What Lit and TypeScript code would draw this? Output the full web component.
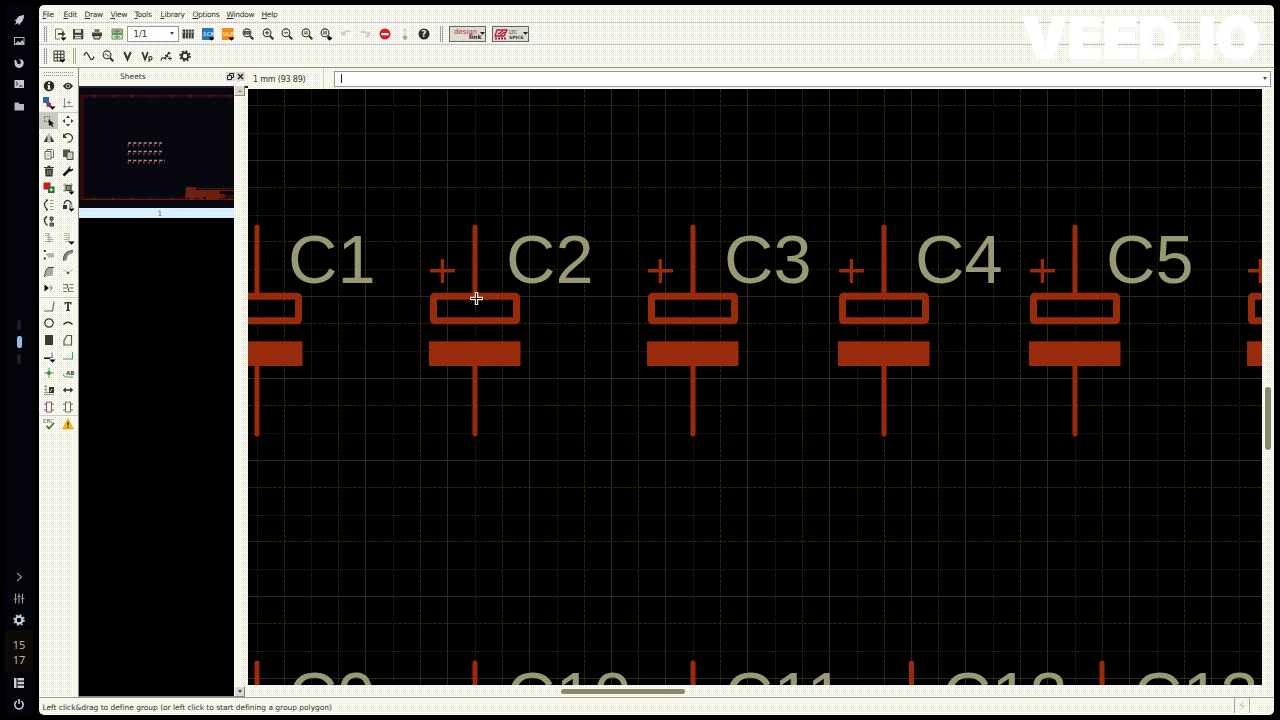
import { LitElement, html, svg, css, nothing } from "lit";
import { customElement } from "lit/decorators.js";

const K = "#35352c";
const caret = svg`<path d="M6.500 9.500h6l-3 3.200z" fill="#000"/>`;
const lens = (inner: unknown) => svg`<circle cx="5" cy="4.800" r="3.900" fill="#eeeee0" stroke="${K}" stroke-width="1.100"/><path d="M8 8l3.300 3.300" stroke="${K}" stroke-width="2.200"/>${inner}`;
const gear = (c: string) => svg`<circle cx="6" cy="6" r="3.300" fill="none" stroke="${c}" stroke-width="2.200"/><circle cx="6" cy="6" r="4.900" fill="none" stroke="${c}" stroke-width="1.800" stroke-dasharray="1.900 1.950"/>`;
const chip = (c: string) => svg`<path d="M3.500 1h2q.5 1.200 1 0h2v10h-5z" fill="none" stroke="${c}"/><path d="M1 3h2.500M1 9h2.500M8.500 3H11M8.500 9H11" stroke="${c}"/>`;

const icons: Record<string, unknown> = {
  rocket: svg`<path d="M11 1C7 1 4.500 3.200 3.400 5.400L1 6l2 1 .2 1.300L1.500 11l3-1.800L5.500 9.500l.6 2L7.500 9C9.500 7.500 11 5 11 1z" fill="#c4c8d4"/>`,
  image: svg`<rect x="1.500" y="2.500" width="9.500" height="7" fill="none" stroke="#a8b4b0"/><path d="M2 9l3-3 2 1.500L9 5l2 2v3H2z" fill="#a8b8ac"/>`,
  fox: svg`<path d="M1.500 2.500l2 1L4 5.500Q4.500 7.500 6.500 7.300 8.500 6.500 7.500 4L6 2Q11.500 2.500 10.700 7 9.500 11 6 11 1 10.500 1.500 5z" fill="#c0c4d0"/>`,
  term: svg`<rect x="1.500" y="2" width="9.500" height="8" fill="#c4c8d0"/><path d="M3 4l2 1.700L3 7.500M6 8h3.500" stroke="#222" fill="none"/>`,
  folder: svg`<path d="M1.500 2.500h4l1 1.500h4.500v6.500h-9.500z" fill="#b4b8c4"/>`,
  chev: svg`<path d="M4 2l4.500 4L4 10" stroke="#8c8c80" fill="none" stroke-width="1.200"/>`,
  sliders: svg`<path d="M2.500 1.500v10M6 1.500v10M9.500 1.500v10M.8 7h3.400M4.400 4.500h3.400M8 6.500h3.500" stroke="#989888" stroke-width="1.200"/>`,
  gearl: gear("#c4ccd4"),
  list: svg`<path d="M1 1h2.500v10H1zM4.500 1H11v2.400H4.500zM4.500 4.800H11v2.400H4.500zM4.500 8.600H11V11H4.500z" fill="#ccd0cc"/>`,
  power: svg`<path d="M3.700 3.200a4.200 4.200 0 1 0 4.600 0M6 1v5" stroke="#c4ccc8" fill="none" stroke-width="1.600"/>`,
  export: svg`<path d="M9 4V2.500L7.500 1h-6v10H6M9 8v1" stroke="#777768" fill="none"/><path d="M4 5h4V3l3.500 3L8 8.500V6.700H4z" fill="${K}"/>${caret}`,
  save: svg`<path d="M1 1h9.500l.8.800v9.500H1z" fill="#44443a"/><path d="M3 1.500h6v3.200H3zM2.500 7h7v1H2.500zM3 8.800h6v1.700H3z" fill="#e4e4d8"/>`,
  print: svg`<path d="M3.500 1h5v3h-5z" fill="#777"/><path d="M1 4.500h10v4H1z" fill="#44443a"/><path d="M3 7.500h6V11H3z" fill="#ccccc0" stroke="${K}"/>`,
  sheet: svg`<path d="M1 1h10.500v4.500H1z" fill="#a4b49c" stroke="#7a8c72"/><path d="M1 6.500h10.500v4.500H1z" fill="#d8ecc8" stroke="#50a050"/><path d="M3 3.200h6M3 8.800h6M6 1v10" stroke="#608058"/>`,
  books: svg`<path d="M.5 1.500H3V10.500H.5zM3.700 1.500h2.200v9H3.700zM6.600 1.500h2.200v9H6.600zM9.500 1.500h2.200v9H9.500z" fill="#3c3c34"/><path d="M.5 4h11" stroke="#ddd" stroke-dasharray="1.500 1.600"/>`,
  scr: svg`<rect x="0" y="0" width="11.500" height="12" fill="#2c78b8"/><text x="1" y="8" font-size="5" fill="#bcd8f0" font-weight="bold">SCR</text>${caret}`,
  ulp: svg`<rect x="0" y="0" width="11.500" height="12" fill="#f08c1c"/><text x="1" y="8" font-size="5" fill="#fce0a0" font-weight="bold">ULP</text>${caret}`,
  zfit: lens(svg`<path d="M2.500 3.500h5v2.600h-5z" fill="#777" stroke="${K}" stroke-width=".8"/>`),
  zin: lens(svg`<path d="M3 4.800h4M5 2.800v4" stroke="${K}"/>`),
  zout: lens(svg`<path d="M3 4.800h4" stroke="${K}"/>`),
  zred: lens(svg`<path d="M3 4h4M3 5.700h4" stroke="${K}" stroke-width=".8"/>`),
  zsel: svg`${lens(svg`<rect x="3" y="3" width="4" height="3.500" fill="#88888a"/>`)}${caret}`,
  undo: svg`<path d="M2.500 6.500L1 3.500M2 7l4-.5M2.500 6.500Q5 2 10.500 3.500" stroke="#ccccbe" stroke-width="1.700" fill="none"/>`,
  redo: svg`<path d="M9.500 6.500L11 3.500M10 8.500L6.500 8M10 8Q8 3 1.500 4" stroke="#ccccbe" stroke-width="1.700" fill="none"/>`,
  stop: svg`<circle cx="6" cy="6" r="5.500" fill="#d81c24"/><path d="M2.500 5h7v2.200h-7z" fill="#fff"/>`,
  dots: svg`<circle cx="6" cy="2" r="1.600" fill="#ccccbe"/><circle cx="6" cy="5.700" r="1.300" fill="#ccccbe"/><circle cx="6" cy="9.500" r="2.200" fill="#a8a89c"/>`,
  help: svg`<circle cx="6" cy="6" r="5.500" fill="#2c2c26"/><text x="3.300" y="9.300" font-size="9" font-weight="bold" fill="#f0f0e0">?</text>`,
  grid: svg`<path d="M1 1h10v10H1zM4.300 1v10M7.700 1v10M1 4.300h10M1 7.700h10" fill="none" stroke="${K}"/>${caret}`,
  wave: svg`<path d="M1 5.500Q3 .5 5 4.500T8 9.500Q10 10 11 6.500" fill="none" stroke="${K}" stroke-width="1.300"/>`,
  zwave: lens(svg`<path d="M2.500 5Q4 2.500 5 5T7.500 5" fill="none" stroke="${K}" stroke-width=".8"/>`),
  V: svg`<path d="M3.300 2L6.500 9.500 9.700 2" fill="none" stroke="${K}" stroke-width="2"/>`,
  Vp: svg`<path d="M1.200 2L4 9.500 6.800 2" fill="none" stroke="${K}" stroke-width="1.800"/><path d="M8 12V6.500M8 7q3-1 3 1.200T8 9.700" fill="none" stroke="${K}" stroke-width="1.200"/>`,
  probe: svg`<path d="M1 10.500Q2 6.500 4 8t2 .5M4.500 9L9.500 2M5 5l3.500 2M8 2.500l2.500 1" fill="none" stroke="${K}" stroke-width="1.300"/><path d="M8 8.500h4M10 6.500v4" stroke="${K}"/>`,
  gear: gear("#33332c"),
  info: svg`<circle cx="6" cy="6" r="5.300" fill="#2c2c24"/><path d="M5 2.200h2v1.700H5zM4.500 5H7v3.500h.8v1H4.300v-1H5V6h-.5z" fill="#f4f4e4"/>`,
  eye: svg`<path d="M.8 6Q6-1 11.200 6 6 13 .8 6z" fill="#33332c"/><circle cx="6" cy="6" r="2.300" fill="#aaa89c"/><circle cx="6" cy="6" r="1.100" fill="#222"/>`,
  layers: svg`<rect x="0" y="0" width="6" height="6" fill="#2c6cac"/><path d="M3 6h5v4H4z" fill="#b83050"/><path d="M6 4l3 6H5z" fill="#903878"/>${caret}`,
  origin: svg`<path d="M2.500 1v10M1 9.500h10M7 3.500v4M5 5.500h4" stroke="#8c8c80" fill="none"/>`,
  group: svg`<path d="M1.500 1.500h5v5h-5z" fill="none" stroke="#66665c" stroke-dasharray="1.500 1"/><path d="M5.500 4.500l5.500 4-2 .5 1.500 2.500-1.300.6L8 9.700 6 11z" fill="#111"/>`,
  move: svg`<path d="M6 .5l2 2.500H4zM6 11.500L4 9h4zM.5 6L3 4v4zM11.500 6L9 8V4z" fill="${K}"/>`,
  mirror: svg`<path d="M4.500 3v7H.8zM7.500 3v7h3.700z" fill="${K}"/><path d="M6 1v10" stroke="#888"/>`,
  rotate: svg`<path d="M2 3.500Q5 .5 8.500 2.500 12 5 9.500 8.500 8 10.500 5.500 10" fill="none" stroke="${K}" stroke-width="1.200"/><path d="M1 1.500V6h4z" fill="${K}"/>`,
  copy: svg`<path d="M2 3.500h6v7.500H2zM4 3.500V1.500h5L10.500 3v6.500H8" fill="none" stroke="#66665c"/><path d="M3.500 6h3M3.500 8h3" stroke="#aaa"/>`,
  paste: svg`<path d="M1 1.500h7v7.500H1z" fill="#55554c"/><path d="M5 4h6v7.500H5z" fill="#ccccc0" stroke="#44443a"/>`,
  trash: svg`<path d="M2 3.500h8l-.5 8h-7zM1 2h3.500V.8h3V2H11v1H1z" fill="#33332c"/><path d="M4.300 5v5M6 5v5M7.700 5v5" stroke="#999" stroke-width=".8"/>`,
  wrench: svg`<path d="M1.500 10.500L7 5" stroke="#11110c" stroke-width="2.600"/><path d="M6 5.500Q5.500 2 9 1L7.700 3.200 9.200 4.600 11.300 3.300Q11 7 7.500 6.500z" fill="#11110c"/>`,
  change: svg`<rect x=".5" y=".5" width="7" height="7" fill="#c41c24"/><rect x="5" y="4.500" width="6.500" height="6.500" fill="#207028"/><path d="M6.500 7.800h3.500M8.200 6v3.500" stroke="#fff"/>`,
  replace: svg`<path d="M1 3h10M1 8.500h10M3 1v9M9.500 1v9" stroke="#99998c"/><rect x="4" y="3.500" width="5" height="5" fill="#88887c" stroke="#44443a"/>${caret}`,
  pins: svg`<path d="M4.500 1.500Q1 3 1.500 6t3 4.500M5 1.500L3 .5M5 10.500l-2 1" fill="none" stroke="${K}" stroke-width="1.300"/><path d="M7 1.500h3.500M7 4.500h3.500M7 7.500h3.500M7 10.500h3.500" stroke="#999"/>`,
  gates: svg`<path d="M2 5Q4-.5 8 2.500L9.500 5" fill="none" stroke="${K}" stroke-width="1.300"/><rect x="1" y="6" width="4" height="4" fill="${K}"/><rect x="7" y="5" width="3.500" height="4" fill="#aaa"/>${caret}`,
  swap: svg`<path d="M4 1.500Q1 3 1.500 6t3 4.500" fill="none" stroke="${K}" stroke-width="1.400"/><path d="M7 2h3v3H7zM8.500 5v2M7 8h3.500v3H7z" fill="#77776c" stroke="#44443a"/>`,
  name: svg`<path d="M2 1.500h4M2 3.500h4M4 5.500h5M4 7.500h6M2 9.500h8M6 1v10" stroke="#a4a498"/>`,
  value: svg`<path d="M2 1.500h5M2 3.500h4M3 5.500h5M2 7.500h5M3 9.500h5M7 1v10" stroke="#b0b0a4"/>${caret}`,
  smash: svg`<path d="M.8 1h2v2h-2zM.8 8.500h2v2h-2z" fill="#333"/><path d="M5 4h6v4.500H5z" fill="#b4b4a8"/><path d="M3 5.700h2" stroke="#777"/>`,
  miter: svg`<path d="M1.500 11.500V8Q3 2 11 1.500V4Q5 5 4.500 11.500z" fill="#8c8c80"/><path d="M1.500 11.500Q1 2 11 1.500" fill="none" stroke="#44443a"/>`,
  split: svg`<path d="M2 10.500Q3 3 5 1.500h5v8z" fill="#aaaa9e"/><path d="M1.500 11Q2.500 3 5 1.500h6" fill="none" stroke="#44443a"/>`,
  opt: svg`<path d="M1 3l3.500 3h3L11 3" fill="none" stroke="#bbbbae"/><circle cx="6" cy="7" r="1.300" fill="#55554c"/>`,
  invoke: svg`<path d="M1.500 2.500L6 6 1.500 9.500z" fill="#111"/><path d="M7.500 3.500q3.500 2.500 0 5z" fill="#999" stroke="#aaa"/>`,
  pinsw: svg`<path d="M1 2.500h4M1 6h4M1 9.500h4M7.500 2.500h4M7.500 6h4M7.500 9.500h4" stroke="#77776c"/><path d="M5 2l2 8" stroke="#44443a"/>`,
  line: svg`<path d="M1 11h8.500L11 1.500" fill="none" stroke="#66665c" stroke-width="1.200"/>`,
  text: svg`<path d="M2.500 2h7v2.500h-1l-.4-1.200H6.900v6.500l1 .3v.8H4.100v-.8l1-.3V3.300H3.900L3.500 4.500h-1z" fill="#33332c"/>`,
  circle: svg`<circle cx="6" cy="6" r="4.200" fill="none" stroke="#33332c" stroke-width="1.200"/>`,
  arc: svg`<path d="M1.500 7.500Q6 3 10.500 7.500" fill="none" stroke="#33332c" stroke-width="1.400"/>`,
  rect: svg`<rect x="2" y="1" width="8" height="10" fill="#3c3c30"/>`,
  poly: svg`<path d="M2 11V6.500L5 1.500h4.500V11z" fill="none" stroke="#55554c" stroke-width="1.200"/>`,
  bus: svg`<path d="M1 7.500h9M9 2.500v5" fill="none" stroke="#4474a4"/><path d="M1 8.500h6" stroke="#222"/>${caret}`,
  net: svg`<path d="M1 9h10M10.500 2v7" fill="none" stroke="#44a844" stroke-width="1.100"/>`,
  junction: svg`<path d="M1 6h10M6 1v10" stroke="#66885c"/><circle cx="6" cy="6" r="2" fill="#2c9c34"/>`,
  label: svg`<path d="M1 7q1 3 3 3h7" fill="none" stroke="#44a844"/><text x="4" y="8" font-size="5.500" font-weight="bold" fill="#44543c">AB</text>`,
  attr: svg`<path d="M1 2.500h3M1 5.500h3M1 8.500h10M1 10.500h10M3 1v8" fill="none" stroke="#99998c"/><path d="M6 3h5v6H6z" fill="#33332c"/><path d="M7 8l2-3" stroke="#ddd"/>`,
  dim: svg`<path d="M.8 6l3-2.800v2h4.400v-2L11.200 6l-3 2.800v-2H3.800v2z" fill="#33332c"/>`,
  module: chip("#84507c"),
  port: chip("#66665c"),
  erc: svg`<text x="0" y="5" font-size="5.500" fill="#55554c">ERC</text><path d="M3.500 8l2.500 2.500L11 5" fill="none" stroke="#2c8040" stroke-width="1.800"/>`,
  warn: svg`<path d="M6 .8L11.400 11H.6z" fill="#f8b818" stroke="#e8a010" stroke-width=".8"/><path d="M6 4v3.500M6 8.700v1.300" stroke="#222" stroke-width="1.300"/>`,
};
const ico = (n: string) => html`<svg class="ico" width="12" height="12" viewBox="0 0 12 12">${icons[n] ?? nothing}</svg>`;

const VX = [257, 284, 311, 338, 365, 393, 420, 447, 475, 502, 529, 557, 584, 611, 638, 665, 693, 720, 747, 775, 802, 829, 857, 884, 911, 938, 965, 993, 1020, 1047, 1075, 1102, 1129, 1157, 1184, 1211, 1239];
const VSOLID = [365, 447, 529, 611, 665, 747, 829, 911, 965, 1047, 1129, 1211];
const VDASH = [284, 338, 420, 502, 584, 638, 720, 802, 884, 938, 1020, 1102, 1184];
const HY = [105, 133, 160, 187, 215, 241, 269, 296, 323, 351, 378, 405, 433, 460, 487, 515, 541, 569, 596, 623, 651, 678];
const HSOLID = [160, 296, 378, 460, 596, 678];
const HDASH = [105, 187, 241, 323, 405, 487, 541, 623];

@customElement("schematic-canvas")
class SchematicCanvas extends LitElement {
  static styles = css`
    :host { display: block; overflow: hidden; background: #000; }
    svg { display: block; }
    .lbl { font: 68.500px "Liberation Sans", Arial, sans-serif; fill: url(#khaki); }
    .s { stroke: #2c2c20; }
    .a { stroke: #282808; stroke-dasharray: 4 1; }
    .o { stroke: #2a2a08; stroke-dasharray: 1 1; }
  `;
  cap(x: number) {
    return svg`<g fill="none" stroke="url(#rust)">
      <path d="M${x - 2.500} 227q0-2.500 2.500-2.500t2.500 2.500v67h-5zM${x - 2.500} 365h5v69q0 2.500-2.500 2.500t-2.500-2.500z" fill="url(#rust)" stroke="none"/>
      <rect x="${x - 41.500}" y="296.200" width="83" height="24.600" rx="1" stroke-width="7"/>
      <rect x="${x - 46}" y="341.300" width="91.500" height="24.700" fill="url(#rust)" stroke="none"/>
      <path d="M${x - 45} 269h10.700v-10h3.400v10h10.900v3.400h-10.900v10.500h-3.400v-10.500h-10.700z" fill="url(#rust)" stroke="none"/>
    </g>`;
  }
  render() {
    const cls = (v: number, s: number[], d: number[]) => (s.includes(v) ? "s" : d.includes(v) ? "a" : "o");
    return html`<svg width="1014" height="596" viewBox="248 89 1014 596">
      <defs>
        <pattern id="rust" width="2" height="2" patternUnits="userSpaceOnUse"><rect width="2" height="2" fill="#992b00"/><rect y="1" width="1" height="1" fill="#992b33"/></pattern>
        <pattern id="khaki" width="2" height="2" patternUnits="userSpaceOnUse"><rect width="2" height="2" fill="#999966"/><rect y="1" width="1" height="1" fill="#9999aa"/></pattern>
      </defs>
      ${VX.map((x) => svg`<path class=${cls(x, VSOLID, VDASH)} d="M${x + 0.5} 89v596"/>`)}
      ${HY.map((y) => svg`<path class=${cls(y, HSOLID, HDASH)} d="M248 ${y + 0.5}h1014"/>`)}
      ${[257, 475, 693, 884, 1075, 1293].map((x) => this.cap(x))}
      ${[257, 475, 693, 911.5, 1102].map((x) => svg`<path d="M${x - 2.500} 690v-27q0-2.500 2.500-2.500t2.500 2.500v27z" fill="url(#rust)"/>`)}
      ${[[257, "C1"], [475, "C2"], [693, "C3"], [884, "C4"], [1075, "C5"]].map(([x, t]) => svg`<text class="lbl" x="${+x + 31}" y="283">${t}</text>`)}
      ${[[257, "C9"], [475, "C10"], [693, "C11"], [911, "C12"], [1102, "C13"]].map(([x, t]) => svg`<text class="lbl" x="${+x + 31}" y="719.500">${t}</text>`)}
      <path d="M476.500 292v13M470 298.500h13" stroke="#ffe8cc" stroke-width="3.400"/>
      <path d="M476.500 293v11M471 298.500h11" stroke="#000" stroke-width="1"/>
    </svg>`;
  }
}

@customElement("sheet-preview")
class SheetPreview extends LitElement {
  static styles = css`
    :host { display: block; }
    svg { display: block; }
  `;
  render() {
    return html`<svg width="155" height="120" viewBox="79 88 155 120">
      <defs>
        <pattern id="n" width="2" height="2" patternUnits="userSpaceOnUse"><rect width="2" height="2" fill="#040404"/><rect x="1" y="1" width="1" height="1" fill="#0a0a30"/><rect width="1" height="1" fill="#0a0a08"/></pattern>
        <pattern id="m" width="2" height="2" patternUnits="userSpaceOnUse"><rect width="2" height="2" fill="#2c0802"/><rect x="1" y="1" width="1" height="1" fill="#401030"/></pattern>
      </defs>
      <rect x="79" y="87" width="155" height="121" fill="url(#n)"/>
      <path d="M80 94.500h154v3H84v100h150v3H80z" fill="url(#m)"/>
      <path d="M84 199.500h150" stroke="#5c2010"/>
      <path d="M93 96h141M93 199h141" stroke="#702c30" stroke-width="1.500" stroke-dasharray="1.500 17.900"/>
      <path d="M128 143h34M128 151.500h34M128 160.500h37" stroke="#a09888" stroke-width="1.300" stroke-dasharray="3.200 2"/>
      <path d="M127.500 145.500h34M127.500 154h34M127.500 162.500h37" stroke="#8c3438" stroke-width="2.500" stroke-dasharray="1.500 3.700"/>
      <path d="M186 187h10v3h38v1h-14v3h5v4h-5v1h-14v-2h-3v2h-4v-1h-4v2h-4v-2h-6z" fill="#6c2010"/>
      <path d="M195 188.500h39M220 196h14" stroke="#4c1810"/>
    </svg>`;
  }
}

const DOCK = ["rocket", "image", "fox", "term", "folder"];
const TOP: [string, number][] = [
  ["export", 17], ["save", 19], ["print", 20], ["sheet", 19], ["combo", 53], ["books", 18], ["scr", 21], ["ulp", 20],
  ["zfit", 20], ["zin", 19], ["zout", 20], ["zred", 19], ["zsel", 20], ["undo", 19], ["redo", 19], ["stop", 21], ["dots", 19], ["help", 20],
];
const PROBES: [string, number][] = [["wave", 19], ["zwave", 19], ["V", 20], ["Vp", 19], ["probe", 19], ["gear", 20]];
const ROWS: (string[] | null)[] = [
  ["info", "eye"], ["layers", "origin"], null, ["group", "move"], ["mirror", "rotate"], ["copy", "paste"], ["trash", "wrench"],
  ["change", "replace"], ["pins", "gates"], ["swap", ""], ["name", "value"], ["smash", "miter"], ["split", "opt"], ["invoke", "pinsw"], null,
  ["line", "text"], ["circle", "arc"], ["rect", "poly"], ["bus", "net"], ["junction", "label"], ["attr", "dim"], ["module", "port"], null, ["erc", "warn"],
];
const MENU = ["File", "Edit", "Draw", "View", "Tools", "Library", "Options", "Window", "Help"];

@customElement("app-root")
class AppRoot extends LitElement {
  static styles = css`
    :host { display: flex; width: 1280px; height: 720px; background: #000; overflow: hidden; position: relative;
      font: 7.500px "DejaVu Sans", sans-serif; color: #30302a; box-sizing: border-box; padding: 5px 6px 5px 5px; gap: 6px; }
    * { box-sizing: border-box; }
    .ico { display: block; overflow: visible; }
    .dock { width: 28px; display: flex; flex-direction: column; align-items: center; padding-top: 4px;
      background: conic-gradient(#000 25%, #0c0c04 0 50%, #000 0 75%, #000028 0) 0 0 / 2px 2px; }
    .dslot { height: 22px; display: grid; place-items: center; }
    .marks { height: 454px; padding-top: 203px; display: flex; flex-direction: column; align-items: center; gap: 6px; }
    .mk { width: 4px; height: 10px; border-radius: 2px; background: #20201a; }
    .mk.on { height: 12px; width: 5px; background: #98b8e0; }
    .clock { height: 42px; width: 28px; padding-top: 6px; text-align: center; font: 11px/15.500px "Noto Sans", sans-serif; color: #b4b8a8; background: #0c0a06; }
    .win { flex: 1; min-width: 0; display: flex; flex-direction: column; border-radius: 5px; overflow: hidden;
      background: conic-gradient(#fff 25%, #ffffb4 0 50%, #fff 0 75%, #ddddff 0) 0 0 / 2px 2px; }
    .menu { height: 18px; flex: none; display: grid; grid-template-columns: 21px 21px 26px 24px 26px 32px 34px 35px 30px; padding-left: 3.500px; line-height: 19px; border-bottom: 1px solid #ccccbb; white-space: nowrap; letter-spacing: -.3px; }
    .bar { height: 22px; flex: none; display: flex; align-items: center; border-bottom: 1px solid #c4c4ba; padding-left: 5px; }
    .bar.two { height: 23px; border-bottom: 1px solid #8c8c84; padding-bottom: 1px; }
    .grip { width: 3px; height: 16px; border: 1px solid #a4a498; border-width: 0 1px; flex: none; }
    .slot { display: grid; place-items: center; flex: none; }
    .first { margin-left: 4px; }
    .two .grip + .first { margin-left: 3.500px; }
    .g1 { margin-left: 5px; }
    .combo { width: 52px; height: 16px; background: #fdfdff; border: 1px solid #999990; display: flex; justify-content: space-between; align-items: center; padding: 0 4px 0 6px; font-size: 8.500px; }
    .dn { border: 2.500px solid transparent; border-top: 3px solid #44443a; border-bottom: 0; }
    .g2 { margin: 0 6px 0 6px; }
    .brand { width: 37px; height: 16px; border: 1px solid #66665c; background: #ddddd0; margin-right: 6px; flex: none; }
    .brand svg { display: block; }
    .mid { flex: 1; min-height: 0; display: flex; }
    .tools { width: 40px; flex: none; border-right: 1px solid #88887c; padding-top: 4px; }
    .tgrip { height: 4px; margin: 0 5px; border: 1px solid #88887c; border-width: 1px 0; border-style: dotted; }
    .trow { height: 16.750px; display: grid; grid-template-columns: 19px 19.500px; }
    .trows { padding-top: 2px; }
    .tsep { height: 1px; background: #ccccc0; }
    .on .slot:first-child { background: #c8c8bc; }
    .sheets { width: 169px; flex: none; display: flex; flex-direction: column; }
    .shead { height: 18px; flex: none; display: flex; align-items: center; padding: 0 0 2px 41px; gap: 80px; }
    .btns { display: flex; gap: 1px; }
    .sbody { flex: 1; display: flex; border-top: 2px solid #222230; min-height: 0; }
    .list { width: 155px; background: #000; border-bottom: 1px solid #888; }
    .cur { height: 10px; background: conic-gradient(#e4f4ff 25%, #d0ecff 0 75%, #e4f4ff 0) 0 0 / 2px 2px; text-align: center; line-height: 11px; padding-left: 7px; color: #607080; }
    .sb { width: 11px; margin-top: -3px; display: flex; flex-direction: column; justify-content: space-between; }
    .sbtn { height: 11px; border: 1px solid #88887c; border-top-color: #fff; border-left-color: #fff; background: #d8d8cc; display: grid; place-items: center; }
    .upc { border: 2px solid transparent; border-bottom: 2.500px solid #777; border-top: 0; }
    .work { flex: 1; min-width: 0; display: grid; grid-template-rows: 21px 596px 1fr; grid-template-columns: 1014px 1fr; }
    .cmd { grid-column: 1 / 3; display: flex; align-items: center; padding: 0 3px 0 5px; }
    .coord { width: 71px; border-right: 1px solid #ccccc0; line-height: 19px; padding-top: 2px; font-size: 8px; letter-spacing: -.2px; white-space: nowrap; }
    .inp { margin-left: 10px; flex: 1; height: 16px; background: #fdfdff; border: 1px solid #99998c; display: flex; align-items: center; justify-content: space-between; padding: 0 3px 0 6px; }
    .bartxt { width: 1px; height: 9px; background: #222; }
    .vs { padding: 297.500px 3px 0; }
    .vthumb { height: 63px; border-radius: 3px; background: #88886c; }
    .hs { padding: 4px 0 0 313px; }
    .hthumb { width: 124px; height: 5px; border-radius: 3px; background: #88886c; }
    .status { height: 18px; flex: none; border-top: 1px solid #99998c; display: flex; justify-content: space-between; line-height: 19px; padding: 0 24px 0 3.500px; letter-spacing: -.03px; }
    .ind { width: 16px; height: 15px; border: 1px solid #aaaa9c; border-width: 0 1px; display: grid; place-items: center; }
    .mark { position: absolute; left: 1018px; top: 8px; }
    .mark text { font: 900 57px Inter, sans-serif; fill: #fff; stroke: #fff; stroke-width: 1.500px; }
  `;
  render() {
    const slot = ([n, w]: [string, number], i = 0) => html`<div class="slot ${i === 0 ? "first" : ""}" style="width:${w}px">${n === "combo" ? html`<div class="combo"><span>1/1</span><i class="dn"></i></div>` : ico(n)}</div>`;
    return html`
      <div class="dock">
        ${DOCK.map((n) => html`<div class="dslot">${ico(n)}</div>`)}
        <div class="marks"><i class="mk"></i><i class="mk on"></i><i class="mk"></i></div>
        ${["chev", "sliders", "gearl"].map((n) => html`<div class="dslot">${ico(n)}</div>`)}
        <div class="clock">15<br />17</div>
        <div class="dslot">${ico("list")}</div>
        <div class="dslot">${ico("power")}</div>
      </div>
      <div class="win">
        <div class="menu">${MENU.map((m) => html`<span><u>${m[0]}</u>${m.slice(1)}</span>`)}</div>
        <div class="bar">
          <i class="grip"></i>
          ${TOP.map(slot)}
          <i class="grip g2"></i>
          <div class="brand"><svg width="35" height="14"><text x="4" y="6.500" font-size="7" fill="#b8284c">design</text><text x="19" y="12" font-size="6" font-weight="bold" fill="#222">link</text><path d="M30 5h5l-2.500 3z" fill="#222"/></svg></div>
          <div class="brand"><svg width="35" height="14"><path d="M4 3h10l-3 6H2zM5 7l5-3M7 8l5-3" fill="none" stroke="#b8183c" stroke-width="1.300"/><path d="M2 11.500h12" stroke="#b8183c" stroke-width="2" stroke-dasharray="2 1"/><text x="16" y="7" font-size="5" fill="#333">LTC</text><text x="16" y="12" font-size="4.500" font-weight="bold" fill="#333">SPICE</text><path d="M30 5h5l-2.500 3z" fill="#222"/></svg></div>
        </div>
        <div class="bar two">
          <i class="grip"></i>
          ${slot(["grid", 17])}
          <i class="grip g1"></i>
          ${PROBES.map(slot)}
        </div>
        <div class="mid">
          <div class="tools">
            <div class="tgrip"></div>
            <div class="trows">
              ${ROWS.map((r) => r ? html`<div class="trow ${r[0] === "group" ? "on" : ""}"><div class="slot">${ico(r[0])}</div><div class="slot">${ico(r[1])}</div></div>` : html`<div class="tsep"></div>`)}
            </div>
          </div>
          <div class="sheets">
            <div class="shead"><span>Sheets</span>
              <div class="btns">
                <svg width="9" height="9"><rect width="9" height="9" fill="#d8d8cc"/><path d="M3.500 3.500v-2h4v4h-2M1.500 3.500h4v4h-4z" fill="none" stroke="#222"/></svg>
                <svg width="9" height="9"><rect width="9" height="9" fill="#d8d8cc"/><path d="M2 2l5 5M7 2L2 7" stroke="#222" stroke-width="1.400"/></svg>
              </div>
            </div>
            <div class="sbody">
              <div class="list"><sheet-preview></sheet-preview><div class="cur">1</div></div>
              <div class="sb"><div class="sbtn"><i class="upc"></i></div><div class="sbtn"><i class="dn"></i></div></div>
            </div>
          </div>
          <div class="work">
            <div class="cmd"><div class="coord">1 mm (93 89)</div><div class="inp"><i class="bartxt"></i><i class="dn"></i></div></div>
            <schematic-canvas></schematic-canvas>
            <div class="vs"><div class="vthumb"></div></div>
            <div class="hs"><div class="hthumb"></div></div>
          </div>
        </div>
        <div class="status"><span>Left click&amp;drag to define group (or left click to start defining a group polygon)</span>
          <div class="ind"><svg width="10" height="10"><path d="M6 0L2 5h3L3 10l5-6H5z" fill="#ccccc0"/></svg></div>
        </div>
      </div>
      <svg class="mark" width="250" height="60"><text x="4" y="50" textLength="238" lengthAdjust="spacingAndGlyphs">VEED.IO</text></svg>
    `;
  }
}
